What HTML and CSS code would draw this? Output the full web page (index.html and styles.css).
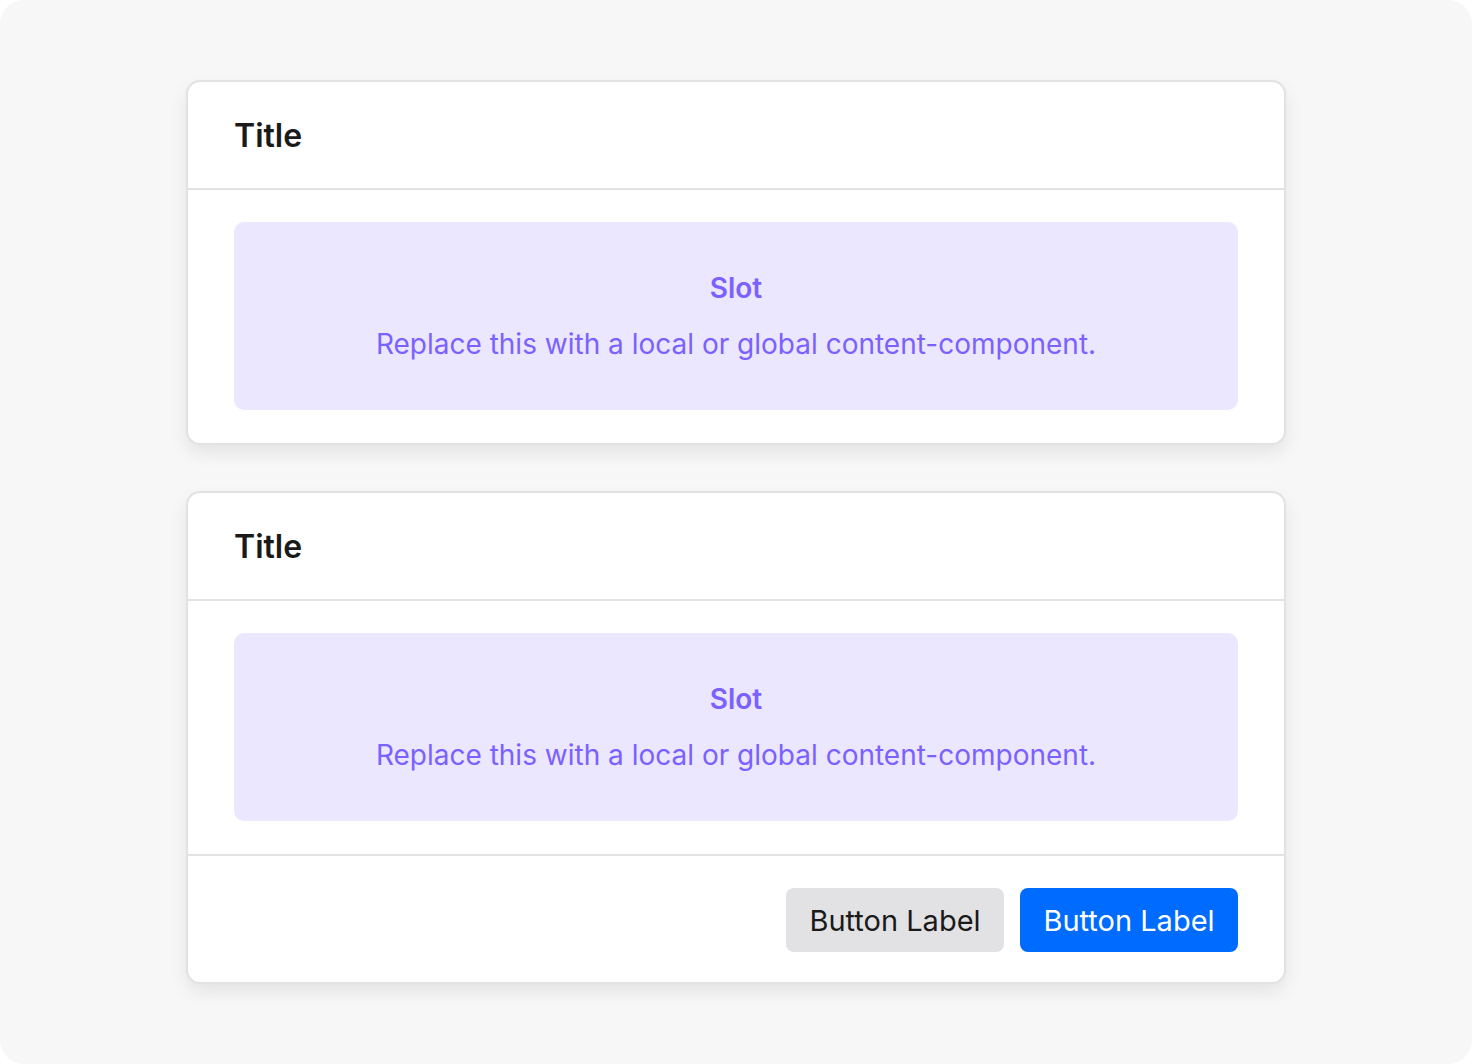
FILE: index.html
```html
<!DOCTYPE html>
<html lang="en">
<head>
    <meta charset="UTF-8">
    <meta name="viewport" content="width=device-width, initial-scale=1.0">
    <title>Card</title>
    <link rel="stylesheet" href="styles.css">
</head>
<body>
    <div class="frame">
        <div class="card">
            <div class="card-header">
                <h2>Title</h2>
            </div>
            <div class="card-body">
                <div class="slot">
                    <p class="slot-title">Slot</p>
                    <p class="slot-text">Replace this with a local or global content-component.</p>
                </div>
            </div>
        </div>

        <div class="card">
            <div class="card-header">
                <h2>Title</h2>
            </div>
            <div class="card-body">
                <div class="slot">
                    <p class="slot-title">Slot</p>
                    <p class="slot-text">Replace this with a local or global content-component.</p>
                </div>
            </div>
            <div class="card-footer">
                <button class="btn btn-secondary">Button Label</button>
                <button class="btn btn-primary">Button Label</button>
            </div>
        </div>
    </div>
</body>
</html>
```

FILE: styles.css
```css
* {
    box-sizing: border-box;
}
body {
    margin: 0;
    background: #ffffff;
    font-family: Inter, "Noto Sans", sans-serif;
}
.frame {
    width: 1472px;
    height: 1064px;
    background: #f7f7f7;
    border-radius: 24px;
    padding-top: 80px;
    display: flex;
    flex-direction: column;
    align-items: center;
    gap: 46px;
}
.card {
    width: 1100px;
    background: #ffffff;
    border: 2px solid #e2e2e2;
    border-radius: 14px;
    box-shadow: 0 8px 18px rgba(0, 0, 0, 0.08);
}
.card-header {
    height: 108px;
    padding: 0 46px;
    display: flex;
    align-items: center;
    border-bottom: 2px solid #e2e2e2;
}
.card-header h2 {
    margin: 0;
    font-size: 32px;
    font-weight: 600;
    color: #1a1a1a;
}
.card-body {
    padding: 32px 46px 33px;
}
.slot {
    height: 188px;
    background: #ebe7ff;
    border-radius: 10px;
    display: flex;
    flex-direction: column;
    align-items: center;
    justify-content: center;
    gap: 20px;
    color: #7b61ff;
    text-align: center;
}
.slot p {
    margin: 0;
    font-size: 28px;
    line-height: 36px;
}
.slot-title {
    font-weight: 600;
}
.card-footer {
    border-top: 2px solid #e2e2e2;
    padding: 32px 46px 30px;
    display: flex;
    justify-content: flex-end;
    gap: 16px;
}
.btn {
    width: 218px;
    height: 64px;
    border: none;
    border-radius: 8px;
    font-family: Inter, "Noto Sans", sans-serif;
    font-size: 29px;
    cursor: pointer;
}
.btn-secondary {
    background: #e2e2e4;
    color: #1a1a1a;
}
.btn-primary {
    background: #006cff;
    color: #ffffff;
}
```
